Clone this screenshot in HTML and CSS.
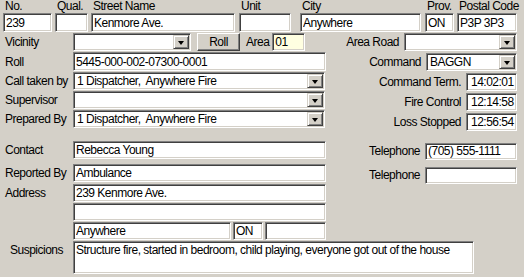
FILE: index.html
```html
<!DOCTYPE html>
<html lang="en">
<head>
    <meta charset="UTF-8">
    <meta name="viewport" content="width=device-width, initial-scale=1.0">
    <title>Incident Report</title>
    <link rel="stylesheet" href="styles.css">
</head>
<body>
    <div class="form">
        <div class="addr-row">
            <div class="field f-no"><label>No.</label><input class="box" value="239"></div>
            <div class="field f-qual"><label>Qual.</label><input class="box" value=""></div>
            <div class="field f-street"><label>Street Name</label><input class="box" value="Kenmore Ave."></div>
            <div class="field f-unit"><label>Unit</label><input class="box" value=""></div>
            <div class="field f-city"><label>City</label><input class="box" value="Anywhere"></div>
            <div class="field f-prov"><label>Prov.</label><input class="box" value="ON"></div>
            <div class="field f-postal"><label>Postal Code</label><input class="box" value="P3P 3P3"></div>
        </div>

        <div class="mid">
            <div class="col-left">
                <div class="row">
                    <span class="lbl">Vicinity</span>
                    <div class="combo w-vic"><span class="combo-text"></span><span class="drop"></span></div>
                    <button class="btn">Roll</button>
                    <span class="lbl-inline">Area</span>
                    <input class="box area" value="01">
                </div>
                <div class="row tall">
                    <span class="lbl">Roll</span>
                    <input class="box w-long" value="5445-000-002-07300-0001">
                </div>
                <div class="row">
                    <span class="lbl">Call taken by</span>
                    <div class="combo w-combo"><span class="combo-text">1 Dispatcher,&nbsp; Anywhere Fire</span><span class="drop"></span></div>
                </div>
                <div class="row">
                    <span class="lbl">Supervisor</span>
                    <div class="combo w-combo"><span class="combo-text"></span><span class="drop"></span></div>
                </div>
                <div class="row">
                    <span class="lbl">Prepared By</span>
                    <div class="combo w-combo"><span class="combo-text">1 Dispatcher,&nbsp; Anywhere Fire</span><span class="drop"></span></div>
                </div>
            </div>

            <div class="col-right">
                <div class="row">
                    <span class="lbl-right">Area Road</span>
                    <div class="combo w-road"><span class="combo-text"></span><span class="drop"></span></div>
                </div>
                <div class="row">
                    <span class="lbl-right">Command</span>
                    <div class="combo w-command"><span class="combo-text">BAGGN</span><span class="drop"></span></div>
                </div>
                <div class="row">
                    <span class="lbl-right">Command Term.</span>
                    <input class="box w-time" value="14:02:01">
                </div>
                <div class="row">
                    <span class="lbl-right">Fire Control</span>
                    <input class="box w-time" value="12:14:58">
                </div>
                <div class="row">
                    <span class="lbl-right">Loss Stopped</span>
                    <input class="box w-time" value="12:56:54">
                </div>
            </div>
        </div>

        <div class="lower">
            <div class="col-left">
                <div class="row">
                    <span class="lbl">Contact</span>
                    <input class="box w-long" value="Rebecca Young">
                </div>
                <div class="row gap-before">
                    <span class="lbl">Reported By</span>
                    <input class="box w-long" value="Ambulance">
                </div>
                <div class="address">
                    <span class="lbl">Address</span>
                    <div class="address-lines">
                        <input class="box w-long" value="239 Kenmore Ave.">
                        <input class="box w-long" value="">
                        <div class="address-city">
                            <input class="box w-acity" value="Anywhere">
                            <input class="box w-aprov" value="ON">
                            <input class="box w-apostal" value="">
                        </div>
                    </div>
                </div>
            </div>

            <div class="col-right">
                <div class="row">
                    <span class="lbl-right">Telephone</span>
                    <input class="box w-phone" value="(705) 555-1111">
                </div>
                <div class="row gap-phone">
                    <span class="lbl-right">Telephone</span>
                    <input class="box w-phone" value="">
                </div>
            </div>
        </div>

        <div class="suspicions">
            <span class="lbl lbl-indent">Suspicions</span>
            <textarea class="box notes">Structure fire, started in bedroom, child playing, everyone got out of the house</textarea>
        </div>
    </div>
</body>
</html>
```

FILE: styles.css
```css
body {
    margin: 0;
    background-color: #d4d0c8;
    font-family: "Liberation Sans", Arial, sans-serif;
    font-size: 12px;
    letter-spacing: -0.5px;
    color: #000;
}
.form {
    width: 524px;
    height: 277px;
    overflow: hidden;
    white-space: nowrap;
}

/* sunken edit box, windows classic */
.box {
    box-sizing: border-box;
    height: 18px;
    margin: 0;
    padding: 0 0 0 2px;
    font: inherit;
    letter-spacing: inherit;
    color: #000;
    background-color: #fff;
    border: 1px solid;
    border-color: #808080 #fff #fff #808080;
    box-shadow: inset 1px 1px 0 #404040, inset -1px -1px 0 #d4d0c8;
    outline: none;
}

.addr-row {
    display: flex;
    padding-left: 3px;
}
.field {
    display: flex;
    flex-direction: column;
}
.field label {
    height: 13px;
    line-height: 13px;
    padding-left: 2px;
}
.field .box {
    height: 19px;
    width: 100%;
}
.f-no { width: 49px; }
.f-qual { width: 33px; margin-left: 3px; }
.f-street { width: 144px; margin-left: 3px; }
.f-unit { width: 52px; margin-left: 4px; }
.f-city { width: 121px; margin-left: 9px; }
.f-prov { width: 29px; margin-left: 4px; }
.f-postal { width: 60px; margin-left: 3px; }

.mid, .lower {
    display: flex;
    justify-content: space-between;
    padding: 0 7px 0 5px;
}
.mid {
    margin-top: 1px;
}
.mid .col-left {
    display: flex;
    flex-direction: column;
    gap: 1px;
}
.mid .col-right {
    display: flex;
    flex-direction: column;
    gap: 2px;
    align-items: flex-end;
}
.row {
    display: flex;
    align-items: center;
    height: 18px;
}
.row.tall {
    height: 19px;
}
.row.tall .box {
    height: 19px;
}
.lbl {
    width: 68px;
    flex-shrink: 0;
}
.lbl-inline {
    margin: 0 3px 0 6px;
}
.lbl-right {
    margin-right: 5px;
}

/* combo box */
.combo {
    box-sizing: border-box;
    height: 18px;
    display: flex;
    align-items: center;
    justify-content: space-between;
    background-color: #fff;
    border: 1px solid;
    border-color: #808080 #fff #fff #808080;
    box-shadow: inset 1px 1px 0 #404040, inset -1px -1px 0 #d4d0c8;
    padding: 0 1px 0 3px;
}
.drop {
    box-sizing: border-box;
    width: 16px;
    height: 14px;
    display: flex;
    align-items: center;
    justify-content: center;
    background-color: #d4d0c8;
    border: 1px solid;
    border-color: #d4d0c8 #404040 #404040 #d4d0c8;
    box-shadow: inset 1px 1px 0 #fff, inset -1px -1px 0 #808080;
}
.drop::after {
    content: "";
    border-left: 3.5px solid transparent;
    border-right: 3.5px solid transparent;
    border-top: 4px solid #000;
    margin-top: 1px;
}

.btn {
    box-sizing: border-box;
    width: 43px;
    height: 18px;
    margin-left: 6px;
    padding: 0;
    font: inherit;
    letter-spacing: inherit;
    color: #000;
    background-color: #d4d0c8;
    border: 1px solid;
    border-color: #fff #404040 #404040 #fff;
    box-shadow: inset -1px -1px 0 #808080;
}

.area {
    width: 33px;
    background-color: #ffffe1;
}
.w-vic { width: 118px; }
.w-long { width: 253px; }
.w-combo { width: 252px; }
.w-road { width: 113px; }
.w-command { width: 91px; }
.w-time { width: 51px; padding-left: 4px; }
.w-phone { width: 92px; height: 17px; }

.lower {
    margin-top: 10px;
}
.lower .col-left {
    display: flex;
    flex-direction: column;
}
.lower .col-right {
    display: flex;
    flex-direction: column;
    align-items: flex-end;
    padding-top: 1px;
}
.gap-before {
    margin-top: 5px;
}
.gap-phone {
    margin-top: 6px;
}
.address {
    display: flex;
    margin-top: 2px;
}
.address .lbl {
    line-height: 18px;
}
.address-lines {
    display: flex;
    flex-direction: column;
    gap: 1px;
}
.address-city {
    display: flex;
    gap: 2px;
}
.w-acity { width: 158px; }
.w-aprov { width: 30px; }
.w-apostal { width: 61px; }

.suspicions {
    display: flex;
    padding-left: 5px;
    margin-top: 1px;
}
.lbl-indent {
    padding-left: 5px;
    width: 63px;
    line-height: 18px;
}
.notes {
    width: 401px;
    height: 33px;
    padding: 1px 2px;
    resize: none;
    overflow: hidden;
    white-space: normal;
}
```
